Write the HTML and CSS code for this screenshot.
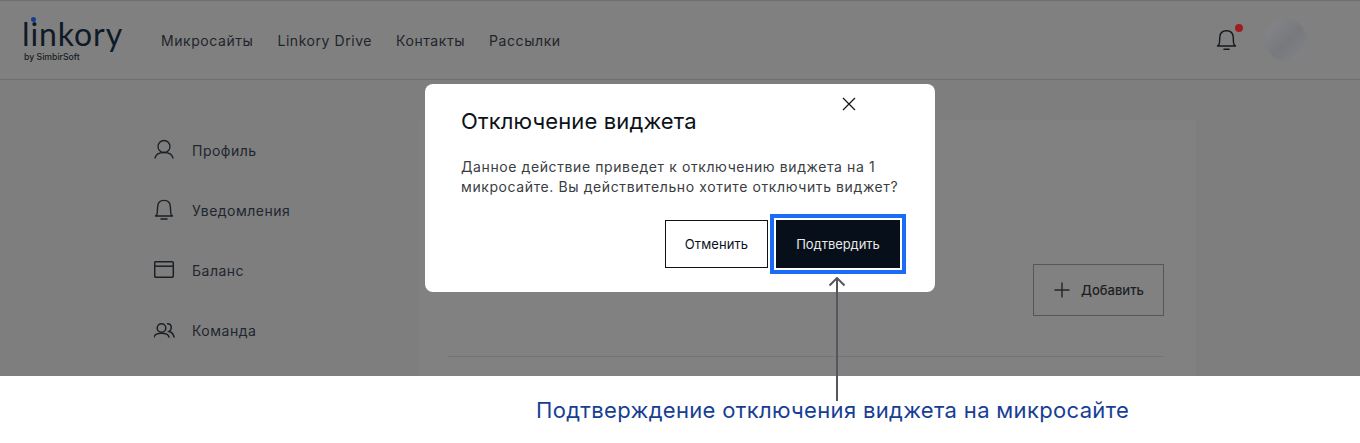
FILE: index.html
```html
<!DOCTYPE html>
<html lang="ru">
<head>
<meta charset="utf-8">
<title>Linkory</title>
<link rel="stylesheet" href="styles.css">
</head>
<body>
<div class="stage">
  <header class="header">
    <div class="logo">
      <div class="logo-word">l<span class="logo-i">i<span class="logo-dot"></span></span>nkory</div>
      <div class="logo-sub">by SimbirSoft</div>
    </div>
    <nav class="nav">
      <span>Микросайты</span>
      <span>Linkory Drive</span>
      <span>Контакты</span>
      <span>Рассылки</span>
    </nav>
    <div class="header-right">
      <div class="bell">
        <svg width="22" height="22" viewBox="0 0 22 22" fill="none" stroke="#14191f" stroke-width="1.4" stroke-linecap="round" stroke-linejoin="round"><path d="M1.500 17c1.400-.6 1.900-1.500 2-3.500l.3-5.500C4 3.500 6.800 1.700 10.500 1.700s6.500 1.800 6.700 6.300l.3 5.500c.1 2 .6 2.900 2 3.500z"/><path d="M8 20.300h5" stroke-width="1.600"/></svg>
        <span class="bell-dot"></span>
      </div>
      <div class="avatar"></div>
    </div>
  </header>
  <div class="layout">
    <aside class="side">
      <div class="side-item">
        <svg class="side-icon" width="22" height="22" viewBox="0 0 22 22" fill="none" stroke="#1b2027" stroke-width="1.300" stroke-linecap="round"><circle cx="10" cy="7.500" r="6"/><path d="M1 19c.8-3.800 4-5.500 9-5.500s8.200 1.700 9 5.500"/></svg>
        <span>Профиль</span>
      </div>
      <div class="side-item">
        <svg class="side-icon" width="22" height="22" viewBox="0 0 22 22" fill="none" stroke="#1b2027" stroke-width="1.400" stroke-linecap="round" stroke-linejoin="round"><path d="M1.500 17c1.300-.5 1.700-1.500 1.800-3.500l.3-5.500C3.800 4 6.300 1.400 10 1.400s6.200 2.600 6.400 6.600l.3 5.500c.1 2 .5 3 1.800 3.500z"/><path d="M7 20h6" stroke-width="1.500"/></svg>
        <span>Уведомления</span>
      </div>
      <div class="side-item">
        <svg class="side-icon" width="22" height="22" viewBox="0 0 22 22" fill="none" stroke="#1b2027" stroke-width="1.500"><rect x=".7" y="2.700" width="18.600" height="15.600" rx="1"/><path d="M.7 7.200h18.600"/></svg>
        <span>Баланс</span>
      </div>
      <div class="side-item">
        <svg class="side-icon" width="22" height="22" viewBox="0 0 22 22" fill="none" stroke="#1b2027" stroke-width="1.500" stroke-linecap="round"><circle cx="7.500" cy="9" r="4.300"/><path d="M0 18c.6-2.400 3-3.800 7.500-3.800S14.400 15.600 15 18"/><path d="M13.500 4.800c2.300 0 3.800 1.800 3.800 4 0 1.600-.9 2.900-2.200 3.600 2.400.6 4.300 2.500 5 5.600"/></svg>
        <span>Команда</span>
      </div>
    </aside>
    <main class="panel">
      <div class="panel-actions">
        <div class="add-btn">
          <svg width="18" height="18" viewBox="0 0 18 18" fill="none" stroke="#23262b" stroke-width="1.400"><path d="M9 1.500v15M1.500 9h15"/></svg>
          <span>Добавить</span>
        </div>
      </div>
      <div class="panel-line"></div>
    </main>
  </div>
  <section class="modal">
    <button class="modal-close" aria-label="Закрыть">
      <svg width="14" height="14" viewBox="0 0 14 14" fill="none" stroke="#14191f" stroke-width="1.300"><path d="M1 1l12 12M13 1L1 13"/></svg>
    </button>
    <h2 class="modal-title">Отключение виджета</h2>
    <p class="modal-text">Данное действие приведет к отключению виджета на 1<br>микросайте. Вы действительно хотите отключить виджет?</p>
    <div class="modal-actions">
      <div class="btn btn-outline">Отменить</div>
      <div class="btn-focus"><div class="btn btn-dark">Подтвердить</div></div>
    </div>
  </section>
</div>
<svg class="arrow" width="18" height="125" viewBox="0 0 18 125" fill="none" stroke="#55565e" stroke-width="2"><path d="M9 1v123"/><path d="M1.500 8.500L9 1l7.500 7.500"/></svg>
<div class="caption">Подтверждение отключения виджета на микросайте</div>
</body>
</html>
```
FILE: styles.css
```css
* { box-sizing: border-box; }
html, body { margin: 0; padding: 0; }
body {
  width: 1360px;
  height: 443px;
  overflow: hidden;
  position: relative;
  background: #fff;
  font-family: Inter, "Liberation Sans", sans-serif;
}
.stage {
  height: 376px;
  background: #7e7e7e;
  overflow: hidden;
  border-top: 1px solid #6f6f6f;
}
.header {
  height: 79px;
  background: #808080;
  border-bottom: 1px solid #6f6f6f;
  display: flex;
  align-items: center;
  padding: 0 53px 0 24px;
}
.logo { width: 137px; flex: none; }
.logo-word {
  font-family: Lato, sans-serif;
  font-size: 32px;
  font-weight: 400;
  line-height: 30px;
  letter-spacing: 0.9px;
  color: #0f1a27;
  margin: 2px 0 0 -2px;
}
.logo-i { position: relative; }
.logo-dot {
  position: absolute;
  left: 1px;
  top: 3px;
  width: 5px;
  height: 5px;
  border-radius: 50%;
  background: #123f90;
}
.logo-sub {
  font-size: 8.700px;
  line-height: 12px;
  margin-top: 2px;
  color: #171c22;
  font-weight: 500;
}
.nav {
  display: flex;
  gap: 24px;
  font-size: 14px;
  color: #1f242b;
  letter-spacing: 0.56px;
}
.header-right {
  margin-left: auto;
  display: flex;
  align-items: center;
  gap: 27px;
}
.bell { position: relative; width: 22px; height: 22px; }
.bell-dot {
  position: absolute;
  left: 19px;
  top: -5px;
  width: 8px;
  height: 8px;
  border-radius: 50%;
  background: #a01c20;
}
.avatar {
  width: 42px;
  height: 42px;
  border-radius: 50%;
  background: linear-gradient(135deg, #85878b, #77797d 55%, #84868a);
}
.layout { display: flex; height: 296px; }
.side {
  width: 418px;
  padding: 59px 0 0 154px;
  flex: none;
  display: flex;
  flex-direction: column;
  gap: 38px;
}
.side-item {
  display: flex;
  align-items: center;
  gap: 16px;
  height: 22px;
  font-size: 14px;
  color: #1f2630;
  letter-spacing: 0.5px;
}
.side-icon { flex: none; }
.panel {
  width: 778px;
  flex: none;
  margin-top: 40px;
  background: #818181;
  padding: 144px 32px 0 30px;
}
.panel-actions { display: flex; justify-content: flex-end; }
.add-btn {
  width: 131px;
  height: 52px;
  border: 1px solid #55565a;
  display: flex;
  align-items: center;
  justify-content: center;
  gap: 10px;
  font-size: 13px;
  font-weight: 500;
  color: #1c1f24;
}
.panel-line { height: 1px; background: #757575; margin-top: 40px; }
.modal {
  position: absolute;
  left: 425px;
  top: 84px;
  width: 510px;
  height: 208px;
  background: #fff;
  border-radius: 8px;
  padding: 23px 32px 0 36px;
}
.modal-close {
  position: absolute;
  left: 417px;
  top: 13px;
  width: 14px;
  height: 14px;
  padding: 0;
  border: 0;
  background: none;
  display: flex;
}
.modal-title {
  margin: 0;
  font-size: 22px;
  line-height: 28px;
  font-weight: 400;
  color: #0b1219;
  letter-spacing: 0.13px;
}
.modal-text {
  margin: 22px 0 0;
  font-size: 14px;
  line-height: 20px;
  color: #3a3d42;
  letter-spacing: 0.6px;
  white-space: nowrap;
}
.modal-actions {
  display: flex;
  align-items: center;
  justify-content: flex-end;
  gap: 2px;
  margin-top: 17px;
  margin-right: -3px;
}
.btn {
  display: flex;
  align-items: center;
  justify-content: center;
  font-size: 13px;
  letter-spacing: 0.1px;
}
.btn-outline {
  width: 103px;
  height: 48px;
  border: 1px solid #0b1219;
  color: #0b1219;
}
.btn-focus {
  padding: 2px;
  border: 4px solid #1a6cf6;
  background: #fff;
}
.btn-dark {
  width: 124px;
  height: 48px;
  background: #07101a;
  color: #e8e8e8;
  letter-spacing: -0.05px;
}
.arrow {
  position: absolute;
  left: 828px;
  top: 277px;
}
.caption {
  position: absolute;
  left: 536px;
  top: 395px;
  font-size: 22px;
  font-weight: 400;
  line-height: 30px;
  color: #173e95;
  letter-spacing: 0.33px;
  white-space: nowrap;
}
```
